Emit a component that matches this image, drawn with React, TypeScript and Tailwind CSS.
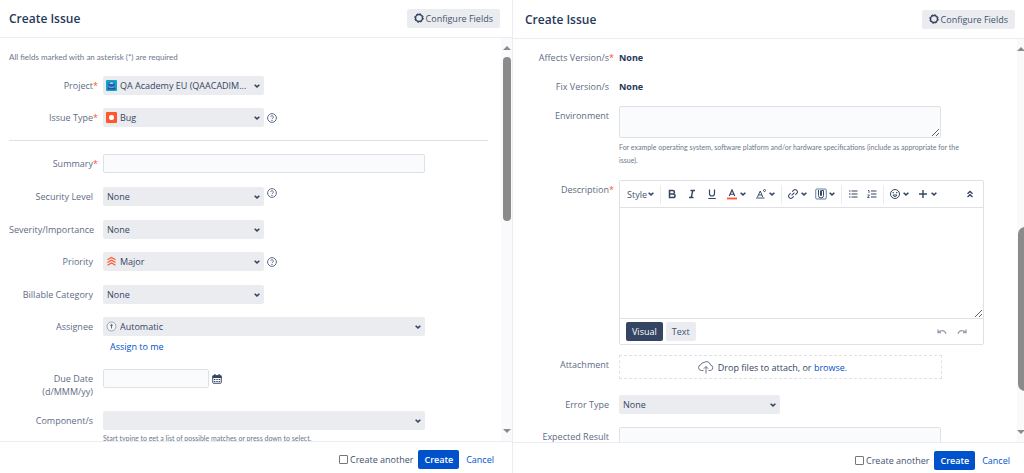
import { useId, type ReactNode } from 'react';
import { clsx } from 'clsx';

const inputStyle = 'block rounded-[2px] border border-[#dfe1e6] bg-[#fafbfc] outline-none focus:border-[#4c9aff]';
const hintStyle = "font-['Lato','Open_Sans',sans-serif] text-[#6b778c]";

function Chevron({ className }: { className?: string }) {
  return (
    <svg viewBox="0 0 8 6" className={clsx('h-[6px] w-[8px] shrink-0', className)} aria-hidden="true">
      <path d="M1.6 1.7 4 3.9 6.4 1.7" fill="none" stroke="#344563" strokeWidth="1.5" />
    </svg>
  );
}

function GearIcon() {
  return (
    <svg viewBox="0 0 20 20" className="h-[10px] w-[10px]" aria-hidden="true">
      <circle cx="10" cy="10" r="8.6" fill="none" stroke="#344563" strokeWidth="2" strokeDasharray="3.4 3.36" />
      <circle cx="10" cy="10" r="7" fill="none" stroke="#344563" strokeWidth="3" />
    </svg>
  );
}

function HelpIcon() {
  return (
    <svg viewBox="0 0 18 18" className="h-[10px] w-[10px]" aria-hidden="true">
      <circle cx="9" cy="9" r="7.9" fill="none" stroke="#5e6c84" strokeWidth="1.8" />
      <path d="M6.6 7.3a2.4 2.4 0 1 1 3.6 2.1c-.8.5-1.2.8-1.2 1.7" fill="none" stroke="#5e6c84" strokeWidth="1.8" />
      <circle cx="9" cy="13.3" r="1.1" fill="#5e6c84" />
    </svg>
  );
}

function ProjectIcon() {
  return (
    <svg viewBox="0 0 22 22" className="h-[11px] w-[11px]" aria-hidden="true">
      <rect width="22" height="22" rx="2" fill="#0da5c8" />
      <path d="M3 19c0-4 3-6 8-6s8 2 8 6z" fill="#24509b" />
      <circle cx="11" cy="10" r="7" fill="#2b5fae" />
      <path d="M7 8a4 4 0 0 1 8 0z" fill="#a9c8ec" />
      <path d="M5 13c3 2.500 9 2.500 12 0" fill="none" stroke="#8db4e2" strokeWidth="2" />
    </svg>
  );
}

function BugIcon() {
  return (
    <svg viewBox="0 0 22 22" className="h-[11px] w-[11px]" aria-hidden="true">
      <rect width="22" height="22" rx="2" fill="#ff5630" />
      <rect x="6" y="6" width="10" height="10" rx="4" fill="#fff" />
    </svg>
  );
}

function MajorIcon() {
  return (
    <svg viewBox="0 0 22 22" className="h-[11px] w-[11px]" aria-hidden="true">
      <g fill="none" stroke="#ff5630" strokeWidth="2.2">
        <path d="M3 7.500 11 3l8 4.500" />
        <path d="M3 13 11 8.500l8 4.500" />
        <path d="M3 18.500 11 14l8 4.500" />
      </g>
    </svg>
  );
}

function AutomaticIcon() {
  return (
    <svg viewBox="0 0 22 22" className="h-[11px] w-[11px]" aria-hidden="true">
      <circle cx="11" cy="11" r="9" fill="#f4f5f7" stroke="#8993a4" strokeWidth="1.6" />
      <path d="M11 5.500 14.500 9.500h-2.500V15h-2V9.500H7.500z" fill="#5e6c84" />
    </svg>
  );
}

function CalendarIcon() {
  return (
    <svg viewBox="0 0 20 20" className="h-[10px] w-[10px]" aria-hidden="true">
      <rect x="1.500" y="3.500" width="17" height="15" rx="1.500" fill="#fff" stroke="#344563" strokeWidth="2" />
      <path d="M1 3h18v5H1zM4.500 0h2.500v4H4.500zM13 0h2.500v4H13z" fill="#344563" />
      <path d="M4 11h12M4 15h12" stroke="#344563" strokeWidth="2" strokeDasharray="2.200 1.100" />
    </svg>
  );
}

function Label({ htmlFor, required, children }: { htmlFor?: string; required?: boolean; children: ReactNode }) {
  return (
    <label htmlFor={htmlFor} className="relative pt-[3px] text-right font-medium text-[#5e6c84]">
      {children}
      {required && <span className="absolute text-[#ff5630]">*</span>}
    </label>
  );
}

function FieldRow({
  label,
  id,
  required,
  className,
  children,
}: {
  label: ReactNode;
  id?: string;
  required?: boolean;
  className?: string;
  children: ReactNode;
}) {
  return (
    <div className={clsx('grid grid-cols-[84px_1fr] gap-x-[10px]', className)}>
      <Label htmlFor={id} required={required}>
        {label}
      </Label>
      <div className="min-w-0">{children}</div>
    </div>
  );
}

type SelectFieldProps = {
  label: string;
  value: string;
  icon?: ReactNode;
  required?: boolean;
  help?: boolean;
  wide?: boolean;
  className?: string;
};

function SelectField({ label, value, icon, required, help, wide, className }: SelectFieldProps) {
  const id = useId();
  return (
    <FieldRow label={label} id={id} required={required} className={className}>
      <div className="flex gap-[3px]">
        <div className={clsx('relative', wide ? 'w-[322px]' : 'w-[161px]')}>
          {icon && <span className="pointer-events-none absolute inset-y-0 left-[3px] flex items-center">{icon}</span>}
          <select
            id={id}
            className={clsx(
              'block h-[19px] w-full appearance-none rounded-[2px] bg-[#ebecf0] pr-[8px] text-[#344563] outline-none',
              icon ? 'pl-[17px]' : 'pl-[4px]',
            )}
          >
            <option>{value}</option>
          </select>
          <span className="pointer-events-none absolute inset-y-0 right-[3px] flex items-center">
            <Chevron />
          </span>
        </div>
        {help && (
          <a href="#help" aria-label={`Get help for ${label}`} className={clsx('flex', icon ? 'items-center' : 'items-start pt-px')}>
            <HelpIcon />
          </a>
        )}
      </div>
    </FieldRow>
  );
}

function Scrollbar({ thumb, clipped }: { thumb: ReactNode; clipped?: boolean }) {
  return (
    <div className={clsx('flex shrink-0 flex-col overflow-hidden bg-[#fafafc] py-[8px]', clipped ? 'w-[7px]' : 'w-[11px]')} aria-hidden="true">
      <svg viewBox="0 0 8 4" className={clsx('h-[4px] w-[8px] shrink-0', !clipped && 'self-center')}>
        <path d="M4 0 8 4H0z" fill="#8b8b8b" />
      </svg>
      <div className={clsx('flex min-h-0 w-[8px] flex-1 flex-col py-[7px]', clipped ? 'pl-px' : 'self-center')}>{thumb}</div>
      <svg viewBox="0 0 8 4" className={clsx('h-[4px] w-[8px] shrink-0', !clipped && 'self-center')}>
        <path d="M0 0h8L4 4z" fill="#8b8b8b" />
      </svg>
    </div>
  );
}

type DialogProps = {
  children: ReactNode;
  scrollbar: ReactNode;
  className?: string;
  headerClass: string;
  footerClass: string;
};

function Dialog({ children, scrollbar, className, headerClass, footerClass }: DialogProps) {
  return (
    <section className={clsx('flex min-h-0 min-w-0 flex-col', className)}>
      <header className={clsx('flex shrink-0 items-center justify-between border-b border-[#ebecf0] pt-[8px] pb-[9px]', headerClass)}>
        <h2 className="pt-px text-[12px] leading-[19px] font-semibold text-[#253858]">Create Issue</h2>
        <button type="button" className="flex h-[19px] items-center gap-[2px] rounded-[2px] bg-[#ebecf0] px-[7px] text-[#42526e]">
          <GearIcon />
          Configure Fields
        </button>
      </header>
      <div className="flex min-h-0 flex-1">
        <div className="min-w-0 flex-1 overflow-hidden">{children}</div>
        {scrollbar}
      </div>
      <footer className={clsx('flex shrink-0 items-center justify-end border-t border-[#ebecf0] pt-[8px]', footerClass)}>
        <label className="flex items-center gap-[2px] text-[#42526e]">
          <input type="checkbox" className="h-[9px] w-[9px] appearance-none rounded-[1px] border border-[#767676] bg-white checked:bg-[#0052cc]" />
          Create another
        </label>
        <button type="submit" className="ml-[5px] h-[19px] rounded-[2px] bg-[#0052cc] px-[6px] font-semibold text-white">
          Create
        </button>
        <a href="#cancel" className="ml-[7px] text-[#0052cc]">
          Cancel
        </a>
      </footer>
    </section>
  );
}

function Tool({ label, menu, children }: { label: string; menu?: boolean; children: ReactNode }) {
  return (
    <button type="button" aria-label={label} className="flex h-[18px] items-center gap-px text-[#344563]">
      <svg viewBox="0 0 24 24" className="h-[12px] w-[12px]" fill="none" stroke="currentColor" strokeWidth="2.400">
        {children}
      </svg>
      {menu && <Chevron />}
    </button>
  );
}

function Divider() {
  return <span className="h-[19px] w-px bg-[#ebecf0]" />;
}

function EditorToolbar() {
  return (
    <div className="flex h-[27px] items-center border-b border-[#dfe1e6] px-[7px]">
      <button type="button" className="flex items-center text-[#42526e]">
        Style
        <Chevron />
      </button>
      <div className="ml-[5px] flex items-center gap-[5px]">
        <Divider />
        <div className="flex gap-[8px]">
          <Tool label="Bold">
            <path d="M7 5h6.500a3.300 3.300 0 0 1 0 6.800H7zM7 11.800h7.500a3.600 3.600 0 0 1 0 7.200H7z" strokeWidth="3" />
          </Tool>
          <Tool label="Italic">
            <path d="M9 5h9M6 19h9M13.500 5l-3 14" strokeWidth="2.800" />
          </Tool>
          <Tool label="Underline">
            <path d="M7 3v8a5 5 0 0 0 10 0V3M4.500 21h15" />
          </Tool>
          <Tool label="Text color" menu>
            <path d="M6.500 16 12 4l5.500 12M8.500 12.500h7" />
            <path d="M2 21h20" stroke="#ff5630" strokeWidth="3.600" />
          </Tool>
          <Tool label="More formatting" menu>
            <path d="M5 18 10.500 6l5 12M7 14h7M2 20h17" strokeWidth="1.900" />
            <circle cx="19" cy="5" r="2" strokeWidth="1.800" />
          </Tool>
        </div>
        <Divider />
        <div className="flex gap-[7px]">
          <Tool label="Link" menu>
            <g transform="rotate(-45 12 12)" strokeWidth="2">
              <path d="M10 7.500H6a4.500 4.500 0 0 0 0 9h4M14 7.500h4a4.500 4.500 0 0 1 0 9h-4M8 12h8" />
            </g>
          </Tool>
          <Tool label="Insert file" menu>
            <rect x="1.500" y="2" width="21" height="20" rx="2" stroke="#4c6f9f" strokeWidth="1.800" />
            <path d="M7 4v11a5 5 0 0 0 10 0V5h-4v10h-2V5" strokeWidth="2" />
          </Tool>
        </div>
        <Divider />
        <div className="flex gap-[7px]">
          <Tool label="Bullet list">
            <path d="M4 6h3M4 12h3M4 18h3M9 6h12M9 12h12M9 18h12" />
          </Tool>
          <Tool label="Numbered list">
            <path d="M10 6h11M10 12h11M10 18h11" />
            <path d="M4 5h2v5M3 14h4l-4 5h4" strokeWidth="1.700" />
          </Tool>
        </div>
        <Divider />
        <div className="flex gap-[7px]">
          <Tool label="Emoji" menu>
            <circle cx="12" cy="12" r="9" strokeWidth="2" />
            <path d="M8 14a4.200 4.200 0 0 0 8 0z" strokeWidth="1.800" />
            <path d="M8.500 8v2.500M15.500 8v2.500" />
          </Tool>
          <Tool label="Insert" menu>
            <path d="M12 4v16M4 12h16" strokeWidth="2.800" />
          </Tool>
        </div>
      </div>
      <div className="ml-auto">
        <Tool label="Collapse toolbar">
          <path d="m7 11.500 5-4.500 5 4.500M7 18l5-4.500 5 4.500" strokeWidth="2.800" />
        </Tool>
      </div>
    </div>
  );
}

function DescriptionEditor({ id }: { id: string }) {
  return (
    <div className="rounded-[2px] border border-[#dfe1e6]">
      <EditorToolbar />
      <textarea id={id} className="block h-[110px] w-full resize-y bg-white p-[6px] outline-none" />
      <div className="flex h-[26px] items-center border-t border-[#dfe1e6] px-[6px]">
        <button type="button" className="h-[19px] rounded-[2px] bg-[#344563] px-[6px] font-medium text-white">
          Visual
        </button>
        <button type="button" className="ml-[3px] h-[19px] rounded-[2px] bg-[#ebecf0] px-[6px] text-[#42526e]">
          Text
        </button>
        <div className="ml-auto flex gap-[10px] pr-[10px]">
          <button type="button" aria-label="Undo">
            <svg viewBox="0 0 20 12" className="h-[6px] w-[10px]" fill="none" stroke="#97a0af" strokeWidth="2.600">
              <path d="M2 1v6h6M3 6.500C7 2 15 1 18 9.500" />
            </svg>
          </button>
          <button type="button" aria-label="Redo">
            <svg viewBox="0 0 20 12" className="h-[6px] w-[10px]" fill="none" stroke="#97a0af" strokeWidth="2.600">
              <path d="M18 1v6h-6M17 6.500C13 2 5 1 2 9.500" />
            </svg>
          </button>
        </div>
      </div>
    </div>
  );
}

function TopOfForm() {
  return (
    <form className="pt-[13px] pr-[13px] pl-[9px]">
      <p className={clsx(hintStyle, 'mb-[12px] text-[8px]')}>All fields marked with an asterisk (*) are required</p>
      <SelectField label="Project" value="QA Academy EU (QAACADIM..." icon={<ProjectIcon />} required className="mb-[13px]" />
      <SelectField label="Issue Type" value="Bug" icon={<BugIcon />} required help className="mb-[13px]" />
      <hr className="mb-[13px] border-[#dfe1e6]" />
      <FieldRow label="Summary" id="summary" required className="mb-[14px]">
        <input id="summary" type="text" className={clsx(inputStyle, 'h-[19px] w-[322px] px-[4px]')} />
      </FieldRow>
      <SelectField label="Security Level" value="None" help className="mb-[14px]" />
      <SelectField label="Severity/Importance" value="None" className="mb-[13px]" />
      <SelectField label="Priority" value="Major" icon={<MajorIcon />} help className="mb-[14px]" />
      <SelectField label="Billable Category" value="None" className="mb-[13px]" />
      <SelectField label="Assignee" value="Automatic" icon={<AutomaticIcon />} wide />
      <a href="#assign" className="mt-[4px] mb-[16px] ml-[101px] block w-fit text-[#0052cc]">
        Assign to me
      </a>
      <FieldRow
        id="due-date"
        className="mb-[13px]"
        label={
          <>
            Due Date
            <br />
            (d/MMM/yy)
          </>
        }
      >
        <div className="flex items-center gap-[3px]">
          <input id="due-date" type="text" className={clsx(inputStyle, 'h-[19px] w-[106px] px-[4px]')} />
          <button type="button" aria-label="Select a date">
            <CalendarIcon />
          </button>
        </div>
      </FieldRow>
      <SelectField label="Component/s" value="" wide />
      <p className={clsx(hintStyle, 'mt-[2px] ml-[94px] text-[7px]')}>Start typing to get a list of possible matches or press down to select.</p>
    </form>
  );
}

function RestOfForm() {
  return (
    <form className="pt-[9px] pr-[33px] pl-[12px]">
      <FieldRow label="Affects Version/s" required className="mb-[13px]">
        <p className="pt-[3px] font-bold text-[#253858]">None</p>
      </FieldRow>
      <FieldRow label="Fix Version/s" className="mb-[13px]">
        <p className="pt-[3px] font-bold text-[#253858]">None</p>
      </FieldRow>
      <FieldRow label="Environment" id="environment" className="mb-[13px]">
        <textarea id="environment" className={clsx(inputStyle, 'h-[32px] w-[322px] resize px-[4px]')} />
        <p className={clsx(hintStyle, 'mt-[3px] pr-[12px] text-[7px] leading-[13px]')}>
          For example operating system, software platform and/or hardware specifications (include as appropriate for the issue).
        </p>
      </FieldRow>
      <FieldRow label="Description" id="description" required className="mb-[10px]">
        <DescriptionEditor id="description" />
      </FieldRow>
      <FieldRow label="Attachment" id="attachment" className="mb-[16px]">
        <div className="flex h-[24px] w-[323px] items-center justify-center gap-[4px] border border-dashed border-[#dfe1e6] pr-[16px] text-[#344563]">
          <svg viewBox="0 0 32 28" className="h-[14px] w-[16px]" fill="none" stroke="#6b778c" strokeWidth="2" aria-hidden="true">
            <path d="M11 21H7a6 6 0 0 1-1-11.900A6 6 0 0 1 12 5a8 8 0 0 1 13 5 5.600 5.600 0 0 1 0 11h-4" />
            <path d="M16 27V13M11.500 17.500 16 13l4.500 4.500" />
          </svg>
          <span>
            Drop files to attach, or{' '}
            <label htmlFor="attachment" className="cursor-pointer text-[#0052cc]">
              browse.
            </label>
          </span>
          <input id="attachment" type="file" className="sr-only" />
        </div>
      </FieldRow>
      <SelectField label="Error Type" value="None" className="mb-[13px]" />
      <FieldRow label="Expected Result" id="expected-result">
        <textarea id="expected-result" className={clsx(inputStyle, 'h-[32px] w-[322px] resize px-[4px]')} />
      </FieldRow>
    </form>
  );
}

export default function App() {
  return (
    <main className="grid h-screen grid-cols-2 overflow-hidden bg-white font-['Open_Sans','Noto_Sans',sans-serif] text-[9px] leading-[13px]">
      <Dialog
        headerClass="pr-[12px] pl-[9px]"
        footerClass="pr-[18px] pb-[4px]"
        scrollbar={<Scrollbar thumb={<div className="h-[45%] rounded-full bg-[#8b8b8b]" />} />}
      >
        <TopOfForm />
      </Dialog>
      <Dialog
        className="border-l border-[#ebecf0] pt-px"
        headerClass="pr-[9px] pl-[12px]"
        footerClass="pr-[14px] pb-[3px]"
        scrollbar={<Scrollbar clipped thumb={<div className="mt-auto mb-[32px] h-[45%] shrink-0 rounded-l-full bg-[#8b8b8b]" />} />}
      >
        <RestOfForm />
      </Dialog>
    </main>
  );
}
